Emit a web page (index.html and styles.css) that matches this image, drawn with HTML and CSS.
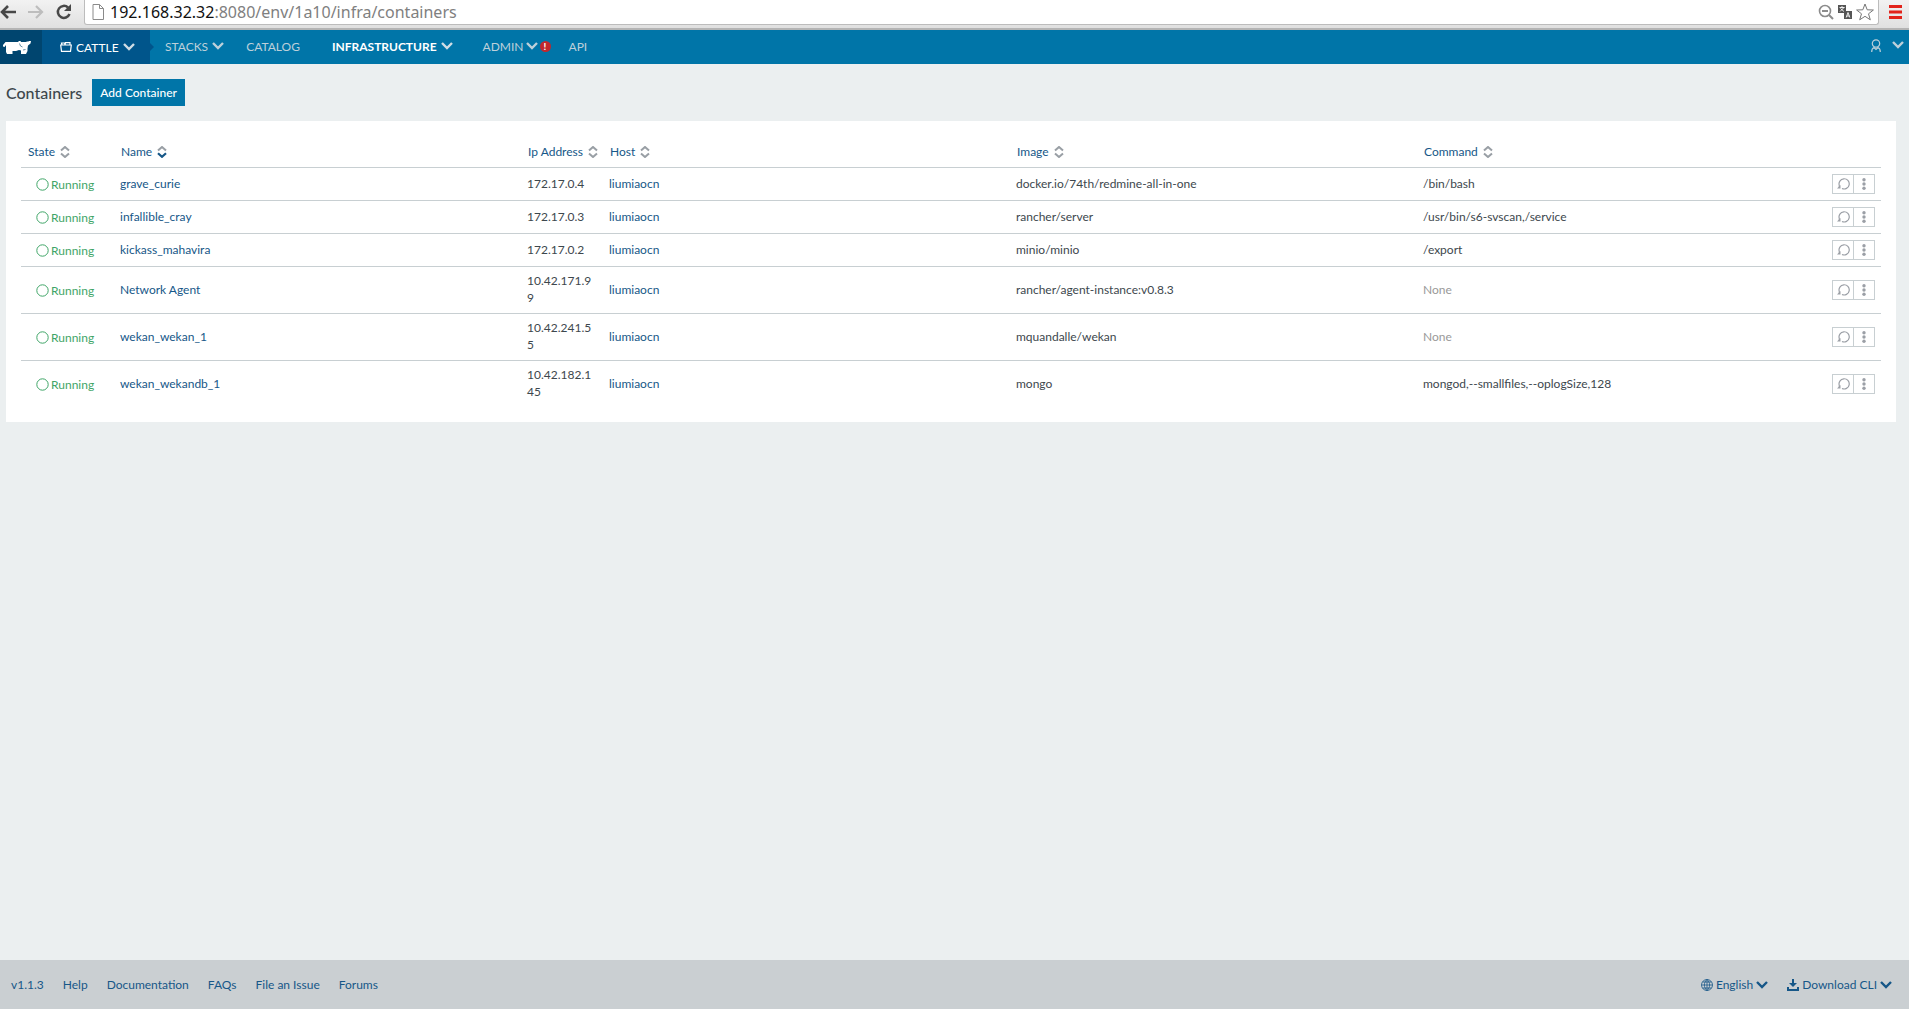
FILE: index.html
```html
<!DOCTYPE html>
<html lang="en">
<head>
  <meta charset="UTF-8">
  <meta name="viewport" content="width=device-width, initial-scale=1.0">
  <title>Containers</title>
  <link rel="stylesheet" href="styles.css">
</head>
<body>
<svg class="sprite" aria-hidden="true">
  <symbol id="chevron" viewBox="0 0 12 8">
    <path d="M1 1l5 5 5-5" fill="none" stroke="currentColor" stroke-width="2.4"/>
  </symbol>
  <symbol id="sort" viewBox="0 0 10 12">
    <path class="up" d="M1 4.6L5 1l4 3.6" fill="none"/>
    <path class="down" d="M1 7.4L5 11l4-3.6" fill="none"/>
  </symbol>
  <symbol id="sort-down" viewBox="0 0 10 12">
    <path d="M1 4.6L5 1l4 3.6" fill="none" stroke="#999fa5"/>
    <path d="M1 7.2L5 10.800l4-3.6" fill="none" stroke="#165788" stroke-width="2.2"/>
  </symbol>
  <symbol id="circle" viewBox="0 0 13 13">
    <circle cx="6.5" cy="6.5" r="5.7" fill="none" stroke="currentColor"/>
  </symbol>
  <symbol id="restart" viewBox="0 0 13 12">
    <path d="M5 10.500A5.100 5.100 0 1 0 2.300 7.500V10" fill="none" stroke="currentColor" stroke-width="1.2"/>
    <path d="M0 10.500h3.500V7z" fill="currentColor"/>
  </symbol>
  <symbol id="dots" viewBox="0 0 4 12">
    <circle cx="2" cy="1.8" r="1.7"/><circle cx="2" cy="6" r="1.7"/><circle cx="2" cy="10.2" r="1.7"/>
  </symbol>
</svg>

<div class="browser">
  <button class="tool" aria-label="Back"><svg width="16" height="14" viewBox="0 0 16 14"><path d="M8 1L2 7l6 6M2 7h14" fill="none" stroke="#484848" stroke-width="2.6"/></svg></button>
  <button class="tool" aria-label="Forward"><svg width="16" height="14" viewBox="0 0 16 14"><path d="M8 1l6 6-6 6M14 7H0" fill="none" stroke="#bdbdbd" stroke-width="2.2"/></svg></button>
  <button class="tool" aria-label="Reload"><svg width="16" height="16" viewBox="0 0 16 16"><path d="M13.500 10A6 6 0 1 1 12 3.500" fill="none" stroke="#484848" stroke-width="2.5"/><path d="M15 0v7H8z" fill="#484848"/></svg></button>
  <div class="address">
    <svg width="12" height="16" viewBox="0 0 12 16"><path d="M1 .5h6.500l4 4v11H1zM7.500.5v4h4" fill="#fff" stroke="#8a8a8a"/></svg>
    <div class="url" role="textbox" contenteditable="true" spellcheck="false" aria-label="Address"><span>192.168.32.32</span>:8080/env/1a10/infra/containers</div>
    <button class="tool" aria-label="Zoom out"><svg width="16" height="16" viewBox="0 0 16 16"><circle cx="7" cy="7" r="5.5" fill="none" stroke="#8c8c8c" stroke-width="1.6"/><path d="M4 7h6M11 11l4 4" stroke="#8c8c8c" stroke-width="2"/></svg></button>
    <button class="tool" aria-label="Translate"><svg width="14" height="14" viewBox="0 0 14 14"><path d="M0 0h8v8H0zM6 6h8v8H6z" fill="#555"/><path d="M1.500 2.500h5M4 1v1.500M2 6.500l4-4M2.500 3.500l3.500 3M8.200 12.500L10 7.500l1.800 5M8.800 11h2.500" fill="none" stroke="#fff" stroke-width=".9"/></svg></button>
    <button class="tool" aria-label="Bookmark"><svg width="18" height="18" viewBox="0 0 18 18"><path d="M9 1l2.200 5.800 6.200.2-4.900 3.800 1.800 6L9 13.300l-5.300 3.500 1.800-6L.6 7l6.200-.2z" fill="#fff" stroke="#777"/></svg></button>
  </div>
  <button class="tool menu" aria-label="Menu"><svg width="13" height="14" viewBox="0 0 13 14"><path d="M0 1.500h13M0 7h13M0 12.500h13" stroke="#e2231a" stroke-width="3"/></svg></button>
</div>

<nav class="navbar">
  <a href="#" class="logo" aria-label="Rancher"><svg width="28" height="13" viewBox="0 0 28 13"><path d="M2.500 1H15l1-1h1.500l.5 1h5l1-.5h1.500L26 0h2l-.5 2.500L25 4.500l-.5 3V10L23 13h-5V9.500l-2-.5-3 1H9.500v3H4l-1-2V4L1.500 6 0 5.500V4z" fill="#fff"/><path d="M16.500 2.500l1 2.500 2 1M20 9l2.500-.5" fill="none" stroke="#00456f" stroke-width=".6"/></svg></a>
  <a href="#" class="env">
    <svg width="12" height="10" viewBox="0 0 12 10"><path d="M.7 3h10.600l-.8 6.300H1.500zM2 3L1.500 1h3l.5 1.500M5 3l.5-2.300H10V3" fill="none" stroke="currentColor" stroke-width="1.2"/></svg>
    <span>CATTLE</span>
    <svg class="chevron"><use href="#chevron"/></svg>
  </a>
  <a href="#" class="item"><span>STACKS</span><svg class="chevron"><use href="#chevron"/></svg></a>
  <a href="#" class="item"><span>CATALOG</span></a>
  <a href="#" class="item active"><span>INFRASTRUCTURE</span><svg class="chevron"><use href="#chevron"/></svg></a>
  <a href="#" class="item admin"><span>ADMIN</span><svg class="chevron"><use href="#chevron"/></svg><b class="alert">!</b></a>
  <a href="#" class="item"><span>API</span></a>
  <button class="user" aria-label="Account">
    <svg width="10" height="13" viewBox="0 0 10 13"><circle cx="5" cy="4.5" r="3.7" fill="none" stroke="currentColor" stroke-width="1.2"/><path d="M.7 13c0-3 1-4 2.300-4.500L5 10.500l2-2C8.300 9 9.300 10 9.300 13" fill="none" stroke="currentColor" stroke-width="1.2"/></svg>
    <svg class="chevron"><use href="#chevron"/></svg>
  </button>
</nav>

<main>
  <header class="title">
    <h1>Containers</h1>
    <button class="add">Add Container</button>
  </header>

  <section class="panel">
    <table>
      <colgroup>
        <col class="col-state"><col><col class="col-ip"><col><col><col><col class="col-actions">
      </colgroup>
      <thead>
        <tr>
          <th><a href="#">State <svg class="sort"><use href="#sort"/></svg></a></th>
          <th><a href="#">Name <svg class="sort"><use href="#sort-down"/></svg></a></th>
          <th><a href="#">Ip Address <svg class="sort"><use href="#sort"/></svg></a></th>
          <th><a href="#">Host <svg class="sort"><use href="#sort"/></svg></a></th>
          <th><a href="#">Image <svg class="sort"><use href="#sort"/></svg></a></th>
          <th><a href="#">Command <svg class="sort"><use href="#sort"/></svg></a></th>
          <th></th>
        </tr>
      </thead>
      <tbody>
        <tr>
          <td class="icons"><div class="state"><svg><use href="#circle"/></svg>Running</div></td>
          <td><a href="#">grave_curie</a></td>
          <td class="ip">172.17.0.4</td>
          <td><a href="#">liumiaocn</a></td>
          <td>docker.io/74th/redmine-all-in-one</td>
          <td>/bin/bash</td>
          <td class="icons"><div class="actions"><button aria-label="Restart"><svg class="restart"><use href="#restart"/></svg></button><button aria-label="More"><svg class="dots"><use href="#dots"/></svg></button></div></td>
        </tr>
        <tr>
          <td class="icons"><div class="state"><svg><use href="#circle"/></svg>Running</div></td>
          <td><a href="#">infallible_cray</a></td>
          <td class="ip">172.17.0.3</td>
          <td><a href="#">liumiaocn</a></td>
          <td>rancher/server</td>
          <td>/usr/bin/s6-svscan,/service</td>
          <td class="icons"><div class="actions"><button aria-label="Restart"><svg class="restart"><use href="#restart"/></svg></button><button aria-label="More"><svg class="dots"><use href="#dots"/></svg></button></div></td>
        </tr>
        <tr>
          <td class="icons"><div class="state"><svg><use href="#circle"/></svg>Running</div></td>
          <td><a href="#">kickass_mahavira</a></td>
          <td class="ip">172.17.0.2</td>
          <td><a href="#">liumiaocn</a></td>
          <td>minio/minio</td>
          <td>/export</td>
          <td class="icons"><div class="actions"><button aria-label="Restart"><svg class="restart"><use href="#restart"/></svg></button><button aria-label="More"><svg class="dots"><use href="#dots"/></svg></button></div></td>
        </tr>
        <tr>
          <td class="icons"><div class="state"><svg><use href="#circle"/></svg>Running</div></td>
          <td><a href="#">Network Agent</a></td>
          <td class="ip">10.42.171.99</td>
          <td><a href="#">liumiaocn</a></td>
          <td>rancher/agent-instance:v0.8.3</td>
          <td class="none">None</td>
          <td class="icons"><div class="actions"><button aria-label="Restart"><svg class="restart"><use href="#restart"/></svg></button><button aria-label="More"><svg class="dots"><use href="#dots"/></svg></button></div></td>
        </tr>
        <tr>
          <td class="icons"><div class="state"><svg><use href="#circle"/></svg>Running</div></td>
          <td><a href="#">wekan_wekan_1</a></td>
          <td class="ip">10.42.241.55</td>
          <td><a href="#">liumiaocn</a></td>
          <td>mquandalle/wekan</td>
          <td class="none">None</td>
          <td class="icons"><div class="actions"><button aria-label="Restart"><svg class="restart"><use href="#restart"/></svg></button><button aria-label="More"><svg class="dots"><use href="#dots"/></svg></button></div></td>
        </tr>
        <tr>
          <td class="icons"><div class="state"><svg><use href="#circle"/></svg>Running</div></td>
          <td><a href="#">wekan_wekandb_1</a></td>
          <td class="ip">10.42.182.145</td>
          <td><a href="#">liumiaocn</a></td>
          <td>mongo</td>
          <td>mongod,--smallfiles,--oplogSize,128</td>
          <td class="icons"><div class="actions"><button aria-label="Restart"><svg class="restart"><use href="#restart"/></svg></button><button aria-label="More"><svg class="dots"><use href="#dots"/></svg></button></div></td>
        </tr>
      </tbody>
    </table>
  </section>
</main>

<footer>
  <a href="#">v1.1.3</a>
  <a href="#">Help</a>
  <a href="#">Documentation</a>
  <a href="#">FAQs</a>
  <a href="#">File an Issue</a>
  <a href="#">Forums</a>
  <button class="language">
    <svg width="12" height="12" viewBox="0 0 12 12"><path d="M6 .5a5.500 5.500 0 1 0 0 11a5.500 5.500 0 1 0 0-11zM6 .5v11M.5 6h11M1.500 3h9M1.500 9h9M6 .5c-3.500 3-3.500 8 0 11c3.500-3 3.500-8 0-11" fill="none" stroke="currentColor" stroke-width=".8"/></svg>
    English
    <svg class="chevron"><use href="#chevron"/></svg>
  </button>
  <button>
    <svg width="12" height="12" viewBox="0 0 12 12"><path d="M5 0h2v4h3L6 8 2 4h3zM0 8h2v2h8V8h2v4H0z" fill="currentColor"/></svg>
    Download CLI
    <svg class="chevron"><use href="#chevron"/></svg>
  </button>
</footer>
</body>
</html>
```
FILE: styles.css
```css
* {
  box-sizing: border-box;
}
body {
  margin: 0;
  min-height: 100vh;
  display: flex;
  flex-direction: column;
  background-color: #ebeff0;
  color: #3d474d;
  font-family: Lato, sans-serif;
  font-size: 12px;
  line-height: 17px;
}
a {
  color: #165788;
  text-decoration: none;
}
button {
  padding: 0;
  border: none;
  background: none;
  font: inherit;
  cursor: pointer;
}
svg {
  display: block;
  flex: none;
}
.sprite {
  position: absolute;
  width: 0;
  height: 0;
}
.chevron {
  width: 12px;
  height: 8px;
}

/* browser bar */
.browser {
  display: flex;
  align-items: flex-start;
  height: 30px;
  background: linear-gradient(#f2f2f2, #e0e0e0);
  border-bottom: 2px solid #b4b4b4;
}
.tool {
  display: flex;
  align-items: center;
  height: 23px;
  margin-right: 12px;
}
.address {
  flex: 1;
  display: flex;
  align-items: center;
  height: 25px;
  padding-left: 7px;
  background-color: #fff;
  border: 1px solid #bcbcbc;
  border-top: none;
  border-radius: 0 0 3px 3px;
}
.address .tool {
  margin-right: 4px;
}
.url {
  flex: 1;
  margin-left: 6px;
  color: #808080;
  font-family: "Noto Sans", sans-serif;
  font-size: 16px;
  line-height: 24px;
}
.url span {
  color: #111;
}
.menu {
  margin: 0 7px 0 10px;
}

/* navigation */
.navbar {
  display: flex;
  height: 34px;
  background-color: #0075a8;
}
.navbar a,
.user {
  display: flex;
  align-items: center;
  color: #bdd0da;
}
.navbar .logo {
  width: 42px;
  padding-left: 3px;
  background-color: #00456f;
}
.navbar .env {
  position: relative;
  width: 108px;
  margin-right: 4px;
  padding-left: 18px;
  gap: 4px;
  background-color: #00558b;
  color: #fff;
}
.env::after {
  content: "";
  position: absolute;
  left: 100%;
  top: 13px;
  border: 4px solid transparent;
  border-left-color: #00558b;
  border-right: none;
}
.env .chevron,
.active .chevron {
  color: #d0dde5;
}
.navbar .item {
  padding: 0 11px 2px;
  gap: 4px;
}
.navbar .active {
  margin: 0 8px 0 10px;
  color: #fff;
  font-weight: bold;
}
.navbar .admin {
  gap: 2px;
  padding-right: 7px;
}
.alert {
  width: 11px;
  height: 11px;
  border-radius: 50%;
  background-color: #c1272d;
  color: #fff;
  font-size: 10px;
  line-height: 11px;
  text-align: center;
}
.user {
  gap: 11px;
  margin-left: auto;
  padding: 0 5px 4px 0;
}

/* content */
main {
  flex: 1;
  padding: 15px 13px 15px 6px;
}
.title {
  display: flex;
  align-items: center;
  gap: 10px;
  margin-bottom: 15px;
}
h1 {
  margin: 0;
  font-size: 16px;
  font-weight: 500;
}
.add {
  height: 27px;
  padding: 0 8px;
  background-color: #0075a8;
  color: #fff;
  font-weight: 500;
}
.panel {
  padding: 15px;
  background-color: #fff;
}
table {
  width: 100%;
  table-layout: fixed;
  border-collapse: separate;
  border-spacing: 0;
}
.col-state {
  width: 93px;
}
.col-ip {
  width: 82px;
}
.col-actions {
  width: 57px;
}
th,
td {
  padding: 5px 6px 7px;
  text-align: left;
  font-weight: normal;
}
th {
  height: 32px;
  padding: 0 0 0 7px;
  border-bottom: 1px solid #c8cfd2;
}
th a {
  display: flex;
  align-items: center;
  gap: 5px;
}
tbody tr:not(:last-child) td {
  border-bottom: 1px solid #c8cfd2;
}
.icons {
  padding: 6px;
}
.sort {
  width: 10px;
  height: 12px;
  stroke: #999fa5;
  stroke-width: 2;
}
.ip {
  word-break: break-all;
}
.state {
  display: flex;
  align-items: center;
  gap: 2px;
  padding-left: 9px;
  color: #3fa567;
}
.state svg {
  width: 13px;
  height: 13px;
}
.none {
  color: #999;
}
.actions {
  display: flex;
  justify-content: flex-end;
}
.actions button {
  display: flex;
  align-items: center;
  justify-content: center;
  width: 22px;
  height: 20px;
  border: 1px solid #c8cfd2;
  color: #9b9fa6;
}
.actions button + button {
  margin-left: -1px;
}
.restart {
  width: 13px;
  height: 12px;
}
.dots {
  width: 4px;
  height: 12px;
  fill: #9b9fa6;
}

footer {
  display: flex;
  align-items: center;
  gap: 19px;
  height: 49px;
  padding: 0 17px 0 11px;
  background-color: #cacfd2;
}
footer button {
  display: flex;
  align-items: center;
  gap: 3px;
  color: #165788;
}
footer .language {
  margin-left: auto;
}
```
